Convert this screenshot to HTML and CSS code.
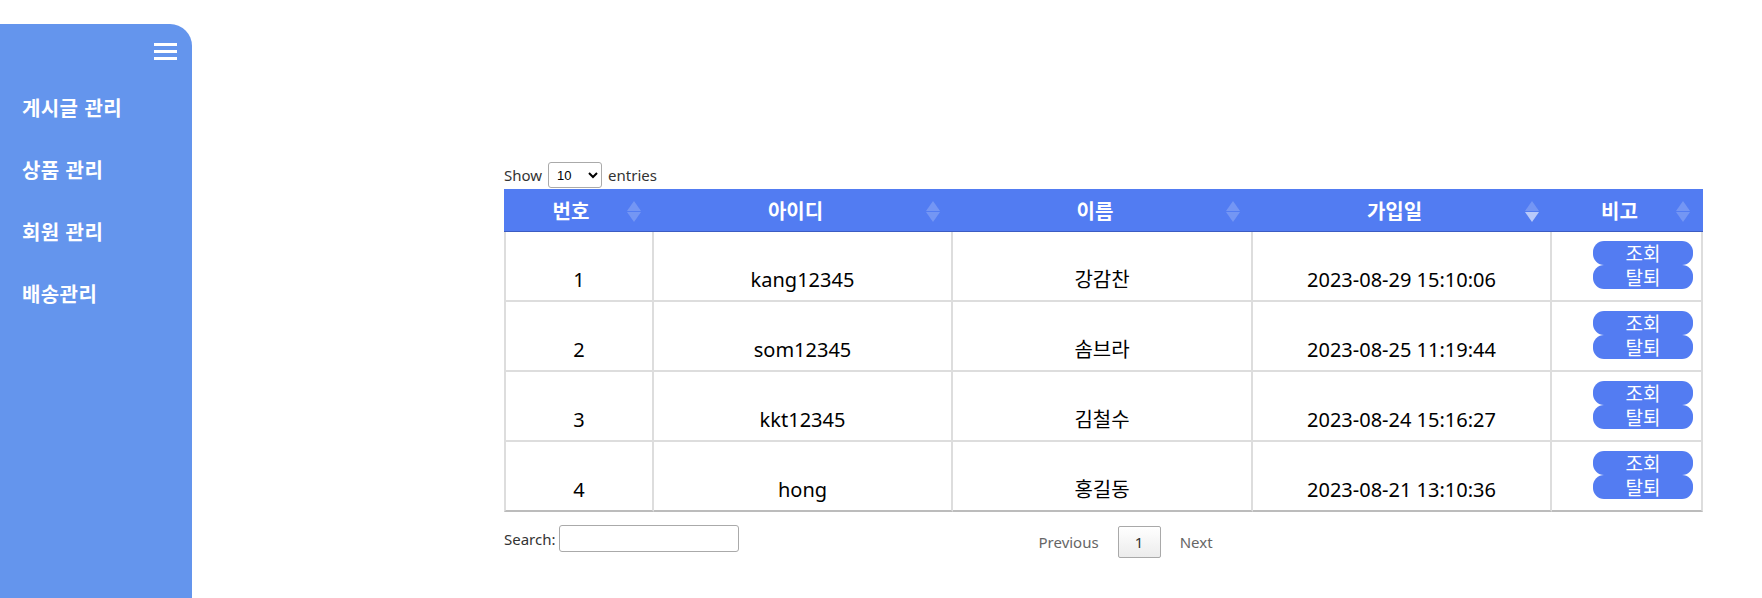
FILE: index.html
```html
<!DOCTYPE html>
<html lang="ko">
<head>
<meta charset="utf-8">
<title>회원 관리</title>
<link rel="stylesheet" href="styles.css">
</head>
<body>
<aside class="sidebar">
  <div class="sidebar-top">
    <svg class="hamburger" width="23" height="18" viewBox="0 0 23 18" aria-hidden="true">
      <rect x="0" y="1" width="23" height="3" fill="#fff"/>
      <rect x="0" y="8" width="23" height="3" fill="#fff"/>
      <rect x="0" y="15" width="23" height="3" fill="#fff"/>
    </svg>
  </div>
  <nav class="menu">
    <a class="menu-item">게시글 관리</a>
    <a class="menu-item">상품 관리</a>
    <a class="menu-item">회원 관리</a>
    <a class="menu-item">배송관리</a>
  </nav>
</aside>
<main class="content">
  <div class="dt-length">
    <span>Show</span>
    <select class="dt-select"><option>10</option><option>25</option><option>50</option></select>
    <span>entries</span>
  </div>
  <table class="dt-table">
    <thead>
      <tr>
        <th class="c-no">번호<svg class="sort" width="14" height="21" viewBox="0 0 14 21"><polygon points="0,10 7,0 14,10" fill="#fff" fill-opacity="0.2"/><polygon points="0,11 7,21 14,11" fill="#fff" fill-opacity="0.2"/></svg></th>
        <th class="c-id">아이디<svg class="sort" width="14" height="21" viewBox="0 0 14 21"><polygon points="0,10 7,0 14,10" fill="#fff" fill-opacity="0.2"/><polygon points="0,11 7,21 14,11" fill="#fff" fill-opacity="0.2"/></svg></th>
        <th class="c-name">이름<svg class="sort" width="14" height="21" viewBox="0 0 14 21"><polygon points="0,10 7,0 14,10" fill="#fff" fill-opacity="0.2"/><polygon points="0,11 7,21 14,11" fill="#fff" fill-opacity="0.2"/></svg></th>
        <th class="c-date">가입일<svg class="sort" width="14" height="21" viewBox="0 0 14 21"><polygon points="0,10 7,0 14,10" fill="#fff" fill-opacity="0.2"/><polygon points="0,11 7,21 14,11" fill="#fff" fill-opacity="0.6"/></svg></th>
        <th class="c-etc">비고<svg class="sort" width="14" height="21" viewBox="0 0 14 21"><polygon points="0,10 7,0 14,10" fill="#fff" fill-opacity="0.2"/><polygon points="0,11 7,21 14,11" fill="#fff" fill-opacity="0.2"/></svg></th>
      </tr>
    </thead>
    <tbody>
      <tr>
        <td>1</td><td>kang12345</td><td>강감찬</td><td>2023-08-29 15:10:06</td>
        <td class="actions"><button class="btn">조회</button><button class="btn">탈퇴</button></td>
      </tr>
      <tr>
        <td>2</td><td>som12345</td><td>솜브라</td><td>2023-08-25 11:19:44</td>
        <td class="actions"><button class="btn">조회</button><button class="btn">탈퇴</button></td>
      </tr>
      <tr>
        <td>3</td><td>kkt12345</td><td>김철수</td><td>2023-08-24 15:16:27</td>
        <td class="actions"><button class="btn">조회</button><button class="btn">탈퇴</button></td>
      </tr>
      <tr>
        <td>4</td><td>hong</td><td>홍길동</td><td>2023-08-21 13:10:36</td>
        <td class="actions"><button class="btn">조회</button><button class="btn">탈퇴</button></td>
      </tr>
    </tbody>
  </table>
  <div class="dt-bottom">
    <label class="dt-search">Search:<input type="search" class="dt-input"></label>
    <div class="dt-paging">
      <a class="page-btn">Previous</a>
      <a class="page-btn current">1</a>
      <a class="page-btn">Next</a>
    </div>
  </div>
</main>
</body>
</html>
```
FILE: styles.css
```css
html, body {
  margin: 0;
  padding: 0;
  height: 100%;
  overflow: hidden;
}

body {
  display: flex;
  align-items: flex-start;
  font-family: "Noto Sans", "Noto Sans CJK KR", sans-serif;
  color: #000;
  background: #fff;
}

.sidebar {
  width: 192px;
  flex: none;
  margin-top: 24px;
  height: calc(100vh - 24px);
  background: #6495ed;
  border-top-right-radius: 22px;
  box-sizing: border-box;
}

.sidebar-top {
  display: flex;
  justify-content: flex-end;
  padding: 18px 15px 0 0;
}

.hamburger {
  display: block;
}

.menu {
  display: flex;
  flex-direction: column;
  margin-top: 16px;
}

.menu-item {
  display: flex;
  align-items: center;
  height: 62px;
  padding-left: 22px;
  color: #fff;
  font-family: "Noto Sans CJK KR", "Noto Sans", sans-serif;
  font-weight: 700;
  font-size: 20px;
  letter-spacing: 0.4px;
}

.content {
  flex: 1;
  padding: 162px 59px 0 312px;
  box-sizing: border-box;
  min-width: 0;
}

.dt-length {
  display: flex;
  align-items: center;
  gap: 6px;
  height: 26px;
  margin-bottom: 1px;
  font-size: 15px;
  color: #333;
}

.dt-select {
  width: 54px;
  height: 26px;
  font-size: 13px;
  font-family: "Liberation Sans", sans-serif;
  padding: 0 4px;
  border: 1px solid #aaa;
  border-radius: 3px;
  background: #fff;
  color: #000;
}

.dt-table {
  width: 1199px;
  table-layout: fixed;
  border-collapse: separate;
  border-spacing: 0;
}

.dt-table th {
  position: relative;
  box-sizing: border-box;
  height: 43px;
  padding: 0 26px 0 10px;
  background: #527cf2;
  color: #fff;
  font-size: 20px;
  font-weight: 700;
  text-align: center;
  border-bottom: 1px solid #3c5cc2;
  font-family: "Noto Sans CJK KR", "Noto Sans", sans-serif;
}

.c-no { width: 150px; }
.c-id { width: 299px; }
.c-name { width: 300px; }
.c-date { width: 299px; }
.c-etc { width: 151px; }

.sort {
  position: absolute;
  right: 13px;
  top: 12px;
}

.dt-table td {
  height: 48px;
  padding: 12px 10px 8px;
  border-right: 2px solid #dddddd;
  border-bottom: 2px solid #dddddd;
  text-align: center;
  vertical-align: bottom;
  font-size: 20px;
  line-height: 24px;
  white-space: nowrap;
}

.dt-table td:first-child {
  border-left: 2px solid #dddddd;
}

.dt-table tbody tr:last-child td {
  border-bottom: 2px solid #bcbcbc;
}

.dt-table td.actions {
  vertical-align: top;
  padding: 9px 8px 11px 0;
}

.btn {
  display: block;
  width: 100px;
  height: 24px;
  margin-left: auto;
  padding: 0;
  border: none;
  border-radius: 11px;
  background: #537cf2;
  color: #fff;
  font-family: "Noto Sans CJK KR", "Noto Sans", sans-serif;
  font-size: 19px;
  line-height: 24px;
}

.dt-bottom {
  display: flex;
  align-items: flex-start;
  padding-top: 13px;
}

.dt-search {
  display: flex;
  align-items: center;
  gap: 3px;
  font-size: 15px;
  color: #333;
  height: 27px;
}

.dt-input {
  width: 180px;
  height: 27px;
  box-sizing: border-box;
  border: 1px solid #aaa;
  border-radius: 3px;
  padding: 2px 4px;
  background: #fff;
}

.dt-paging {
  display: flex;
  align-items: center;
  gap: 4px;
  margin-left: 285px;
  margin-top: 1px;
}

.page-btn {
  display: flex;
  align-items: center;
  justify-content: center;
  height: 32px;
  box-sizing: border-box;
  padding: 0 14px;
  font-size: 15px;
  color: #666;
  border: 1px solid transparent;
  border-radius: 2px;
}

.page-btn.current {
  width: 43px;
  padding: 0;
  color: #333;
  border: 1px solid #a9a9a9;
  background: linear-gradient(to bottom, #ffffff 0%, #ececec 100%);
}
```
